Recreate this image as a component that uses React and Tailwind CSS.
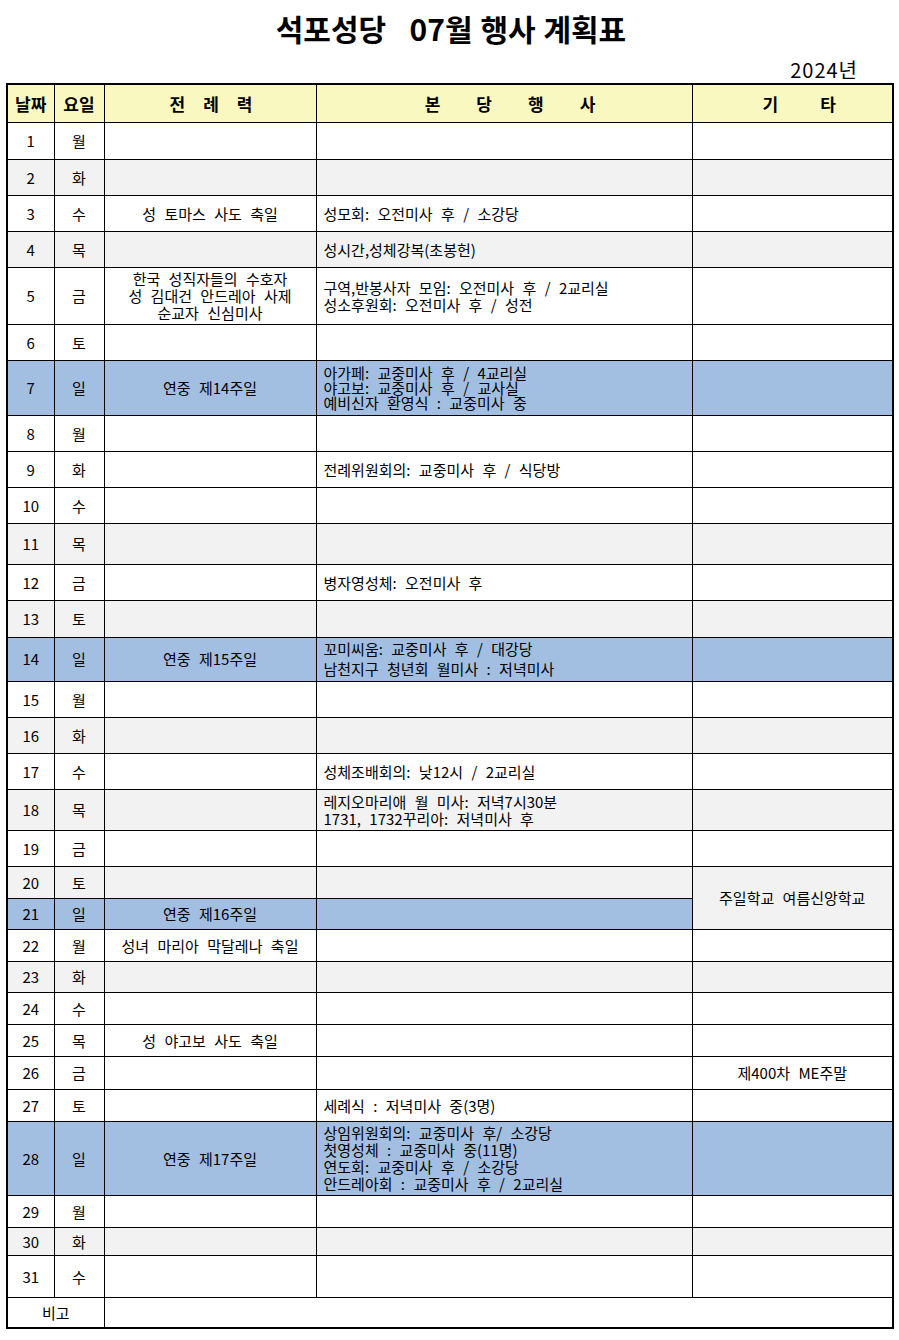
const FONT = { fontFamily: '"Noto Sans CJK KR", "Noto Sans", sans-serif' };

const BG = {
  white: 'bg-white',
  gray: 'bg-[#f2f2f2]',
  blue: 'bg-[#a2bfe1]',
};

// 7월 일정: 날짜, 요일, 전례력, 본당행사(줄 단위), 행 높이, 배경
const rows = [
  { d: 1, w: '월', h: 37 },
  { d: 2, w: '화', h: 36, bg: 'gray' },
  { d: 3, w: '수', h: 36, lit: ['성 토마스 사도 축일'], ev: ['성모회: 오전미사 후 / 소강당'] },
  { d: 4, w: '목', h: 36, bg: 'gray', ev: ['성시간,성체강복(초봉헌)'] },
  {
    d: 5, w: '금', h: 57,
    lit: ['한국 성직자들의 수호자', '성 김대건 안드레아 사제', '순교자 신심미사'],
    ev: ['구역,반봉사자 모임: 오전미사 후 / 2교리실', '성소후원회: 오전미사 후 / 성전'],
  },
  { d: 6, w: '토', h: 36 },
  {
    d: 7, w: '일', h: 55, bg: 'blue', lead: 'leading-[15px]',
    lit: ['연중 제14주일'],
    ev: ['아가페: 교중미사 후 / 4교리실', '야고보: 교중미사 후 / 교사실', '예비신자 환영식 : 교중미사 중'],
  },
  { d: 8, w: '월', h: 36 },
  { d: 9, w: '화', h: 36, ev: ['전례위원회의: 교중미사 후 / 식당방'] },
  { d: 10, w: '수', h: 36 },
  { d: 11, w: '목', h: 41, bg: 'gray' },
  { d: 12, w: '금', h: 36, ev: ['병자영성체: 오전미사 후'] },
  { d: 13, w: '토', h: 37, bg: 'gray' },
  {
    d: 14, w: '일', h: 44, bg: 'blue', lead: 'leading-[20px]',
    lit: ['연중 제15주일'],
    ev: ['꼬미씨움: 교중미사 후 / 대강당', '남천지구 청년회 월미사 : 저녁미사'],
  },
  { d: 15, w: '월', h: 36 },
  { d: 16, w: '화', h: 36, bg: 'gray' },
  { d: 17, w: '수', h: 36, ev: ['성체조배회의: 낮12시 / 2교리실'] },
  { d: 18, w: '목', h: 41, bg: 'gray', ev: ['레지오마리애 월 미사: 저녁7시30분', '1731, 1732꾸리아: 저녁미사 후'] },
  { d: 19, w: '금', h: 36 },
  { d: 20, w: '토', h: 32, bg: 'gray', etc: '주일학교 여름신앙학교', span: 2 },
  { d: 21, w: '일', h: 31, bg: 'blue', lit: ['연중 제16주일'], skipEtc: true },
  { d: 22, w: '월', h: 32, lit: ['성녀 마리아 막달레나 축일'] },
  { d: 23, w: '화', h: 31, bg: 'gray' },
  { d: 24, w: '수', h: 32 },
  { d: 25, w: '목', h: 32, lit: ['성 야고보 사도 축일'] },
  { d: 26, w: '금', h: 33, etc: '제400차 ME주말' },
  { d: 27, w: '토', h: 32, ev: ['세례식 : 저녁미사 중(3명)'] },
  {
    d: 28, w: '일', h: 74, bg: 'blue', lead: 'leading-[17px]',
    lit: ['연중 제17주일'],
    ev: ['상임위원회의: 교중미사 후/ 소강당', '첫영성체 : 교중미사 중(11명)', '연도회: 교중미사 후 / 소강당', '안드레아회 : 교중미사 후 / 2교리실'],
  },
  { d: 29, w: '월', h: 32 },
  { d: 30, w: '화', h: 28, bg: 'gray' },
  { d: 31, w: '수', h: 42 },
];

const cell = 'border border-black p-0';

function Lines({ items }) {
  return items.map((t, i) => <div key={i} className="whitespace-pre">{t}</div>);
}

function Spread({ chars, gap, pad }) {
  return (
    <div className={`flex justify-center ${gap} ${pad}`}>
      {chars.map((c) => <span key={c}>{c}</span>)}
    </div>
  );
}

export default function App() {
  return (
    <div className="w-[899px] h-[1340px] bg-white text-black" style={FONT}>
      <div className="h-[56px] pt-[6px] pl-[3px] text-center text-[30px] font-bold leading-[44px] whitespace-pre [word-spacing:1px]">
        석포성당   07월 행사 계획표
      </div>
      <div className="h-[27px] pr-[41px] text-right text-[20px] leading-[27px] tracking-[1px]">2024년</div>

      <table className="ml-[6px] w-[886px] border-collapse border-2 border-black table-fixed text-[15px] leading-[17px] [word-spacing:5px]">
        <colgroup>
          <col className="w-[47px]" />
          <col className="w-[50px]" />
          <col className="w-[212px]" />
          <col className="w-[376px]" />
          <col className="w-[201px]" />
        </colgroup>
        <thead>
          <tr className="h-[38px] bg-[#f9f8c0] text-[17px] font-black [word-spacing:0px]">
            <th className={cell}>날짜</th>
            <th className={cell}>요일</th>
            <th className={cell}><Spread chars={['전', '례', '력']} gap="gap-[18px]" pad="pl-[2px]" /></th>
            <th className={cell}><Spread chars={['본', '당', '행', '사']} gap="gap-[36px]" pad="pl-[12px]" /></th>
            <th className={cell}><Spread chars={['기', '타']} gap="gap-[42px]" pad="pl-[14px]" /></th>
          </tr>
        </thead>
        <tbody>
          {rows.map((r) => (
            <tr key={r.d} className={`${BG[r.bg || 'white']} ${r.lead || ''}`} style={{ height: r.h }}>
              <td className={`${cell} text-center`}>{r.d}</td>
              <td className={`${cell} text-center`}>{r.w}</td>
              <td className={`${cell} text-center`}>{r.lit && <Lines items={r.lit} />}</td>
              <td className={`${cell} pl-[7px]`}>{r.ev && <Lines items={r.ev} />}</td>
              {r.skipEtc ? null : (
                <td
                  rowSpan={r.span || 1}
                  className={`${cell} text-center whitespace-pre ${r.span ? 'bg-[#f2f2f2]' : ''}`}
                >
                  {r.etc}
                </td>
              )}
            </tr>
          ))}
          <tr className="h-[31px] bg-white">
            <td colSpan={2} className={`${cell} text-center`}>비고</td>
            <td colSpan={3} className={cell}></td>
          </tr>
        </tbody>
      </table>
    </div>
  );
}
